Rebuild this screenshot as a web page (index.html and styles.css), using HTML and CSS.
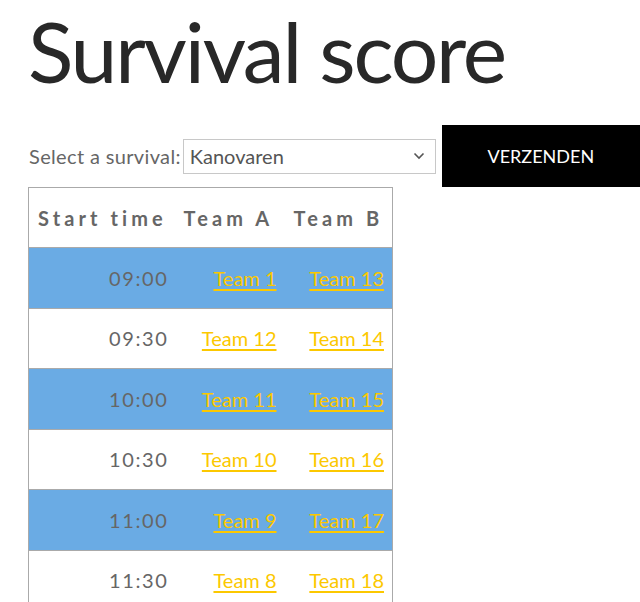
FILE: index.html
```html
<!DOCTYPE html>
<html lang="nl">
<head>
<meta charset="utf-8">
<title>Survival score</title>
<link rel="stylesheet" href="styles.css">
</head>
<body>
<main class="page">
  <h1 class="title">Survival score</h1>
  <form class="pick">
    <label class="pick-label" for="survival">Select a survival:</label>
    <div class="select">
      <span class="select-value">Kanovaren</span>
      <svg class="select-caret" width="12" height="8" viewBox="0 0 12 8"><path d="M1.5 1.5 L6 6 L10.5 1.5" fill="none" stroke="#555" stroke-width="1.6"/></svg>
    </div>
    <button class="send" type="button">VERZENDEN</button>
  </form>
  <table class="schedule">
    <colgroup><col class="c1"><col class="c2"><col class="c3"></colgroup>
    <thead>
      <tr><th>Start time</th><th>Team A</th><th>Team B</th></tr>
    </thead>
    <tbody>
      <tr class="alt"><td class="time">09:00</td><td><a href="#">Team 1</a></td><td><a href="#">Team 13</a></td></tr>
      <tr><td class="time">09:30</td><td><a href="#">Team 12</a></td><td><a href="#">Team 14</a></td></tr>
      <tr class="alt"><td class="time">10:00</td><td><a href="#">Team 11</a></td><td><a href="#">Team 15</a></td></tr>
      <tr><td class="time">10:30</td><td><a href="#">Team 10</a></td><td><a href="#">Team 16</a></td></tr>
      <tr class="alt"><td class="time">11:00</td><td><a href="#">Team 9</a></td><td><a href="#">Team 17</a></td></tr>
      <tr><td class="time">11:30</td><td><a href="#">Team 8</a></td><td><a href="#">Team 18</a></td></tr>
    </tbody>
  </table>
</main>
</body>
</html>
```
FILE: styles.css
```css
html, body {
  margin: 0;
  padding: 0;
  background: #fff;
  overflow: hidden;
}
body {
  font-family: "Lato", "Open Sans", sans-serif;
  color: #666;
}
.page {
  padding: 0 0 0 28px;
}
.title {
  margin: 0;
  font-weight: 400;
  font-size: 84px;
  line-height: normal;
  color: #282828;
  letter-spacing: -2.2px;
  white-space: nowrap;
}
.pick {
  display: flex;
  align-items: center;
  margin-top: 24px;
  height: 62px;
}
.pick > * {
  flex: none;
}
.pick-label {
  font-size: 20px;
  letter-spacing: 0.35px;
  color: #666;
  padding-left: 1px;
  white-space: nowrap;
}
.select {
  margin-left: 2px;
  width: 253px;
  height: 35px;
  box-sizing: border-box;
  border: 1px solid #c8c8c8;
  display: flex;
  align-items: center;
  justify-content: space-between;
  padding: 0 10px 0 6px;
  font-size: 20px;
  color: #555;
}
.send {
  margin-left: 6px;
  width: 198px;
  height: 62px;
  border: 0;
  background: #000;
  color: #fff;
  font-family: inherit;
  font-size: 18px;
  padding: 0;
}
.schedule {
  border-collapse: collapse;
  table-layout: fixed;
  width: 364px;
  border: 1px solid #aaa;
}
.c1 { width: 146px; }
.c2 { width: 110px; }
.c3 { width: 108px; }
.schedule th {
  height: 59px;
  padding: 0 0 0 9px;
  text-align: left;
  font-size: 20px;
  font-weight: 700;
  letter-spacing: 4.1px;
  color: #666;
  white-space: nowrap;
  border-bottom: 1px solid #aaa;
}
.schedule td {
  height: 59.5px;
  padding: 0 8px 0 0;
  text-align: right;
  font-size: 20px;
  color: #666;
  border-bottom: 1px solid #aaa;
  white-space: nowrap;
}
.schedule td.time {
  letter-spacing: 1.6px;
  padding-right: 6px;
}
.schedule tr.alt td {
  background: #6aabe4;
}
.schedule a {
  color: #fcc800;
  text-decoration: underline;
  text-underline-offset: 3px;
}
```
